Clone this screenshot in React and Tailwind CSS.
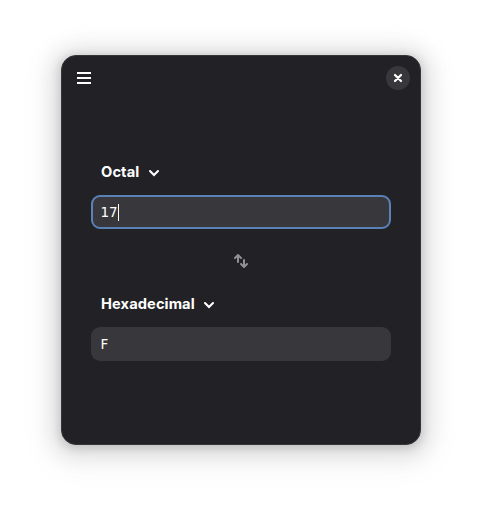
function Chevron() {
  return (
    <svg className="h-4 w-4" viewBox="0 0 16 16" fill="none" stroke="currentColor" strokeWidth="2.1" strokeLinecap="round" strokeLinejoin="miter">
      <path d="M4 7l4 4 4-4" />
    </svg>
  );
}

function UnitButton({ label }) {
  return (
    <button className="flex h-[34px] items-center gap-[6.4px] self-start px-[10px] font-[Inter,'Noto_Sans',sans-serif] text-[14.67px] leading-[18px] font-bold tracking-[0.09px]">
      <span>{label}</span>
      <Chevron />
    </button>
  );
}

export default function App() {
  return (
    <div className="h-[512px] w-[482px] overflow-hidden bg-white pt-[55px] pl-[61px]">
      <div className="flex h-[390px] w-[360px] flex-col rounded-[15px] border border-[#353539] bg-[#222226] text-white shadow-[0_2px_8px_2px_rgba(0,0,0,0.13),0_3px_20px_10px_rgba(0,0,0,0.09),0_6px_32px_16px_rgba(0,0,0,0.04)]">
        <header className="flex h-11 shrink-0 items-center justify-between pr-[10px] pl-[15px]">
          <button className="flex flex-col gap-[3px]" aria-label="Menu">
            <span className="h-[2px] w-[14px] bg-white" />
            <span className="h-[2px] w-[14px] bg-white" />
            <span className="h-[2px] w-[14px] bg-white" />
          </button>
          <button className="flex h-6 w-6 items-center justify-center rounded-full bg-[#38383c]" aria-label="Close">
            <svg className="h-4 w-4" viewBox="0 0 16 16" fill="none" stroke="currentColor" strokeWidth="2.2" strokeLinecap="round">
              <path d="M5 5l6 6M11 5l-6 6" />
            </svg>
          </button>
        </header>
        <main className="flex flex-col px-[29px] pt-[55px]">
          <UnitButton label="Octal" />
          <div className="mt-[6px] flex h-[34px] items-center rounded-[9px] border-2 border-[#5b81b9] bg-[#38383c] pl-[7.5px] font-['DejaVu_Sans',sans-serif] text-[13.5px] leading-[18px]">
            <span className="h-[18px]">17</span>
            <span className="h-[17px] w-px bg-white" />
          </div>
          <div className="flex h-[58px] items-center justify-center pt-[6px] text-[#909092]">
            <svg className="h-4 w-4" viewBox="0 0 16 16" fill="none" stroke="currentColor" strokeWidth="2" strokeLinecap="round" strokeLinejoin="round">
              <path d="M5 9V3M2 5l3-3 3 3M11 7v6M8 11l3 3 3-3" />
            </svg>
          </div>
          <UnitButton label="Hexadecimal" />
          <div className="mt-[6px] flex h-[34px] items-center rounded-[9px] bg-[#38383c] pl-[9.5px] font-['DejaVu_Sans',sans-serif] text-[13.5px] leading-[18px]">F</div>
        </main>
      </div>
    </div>
  );
}
